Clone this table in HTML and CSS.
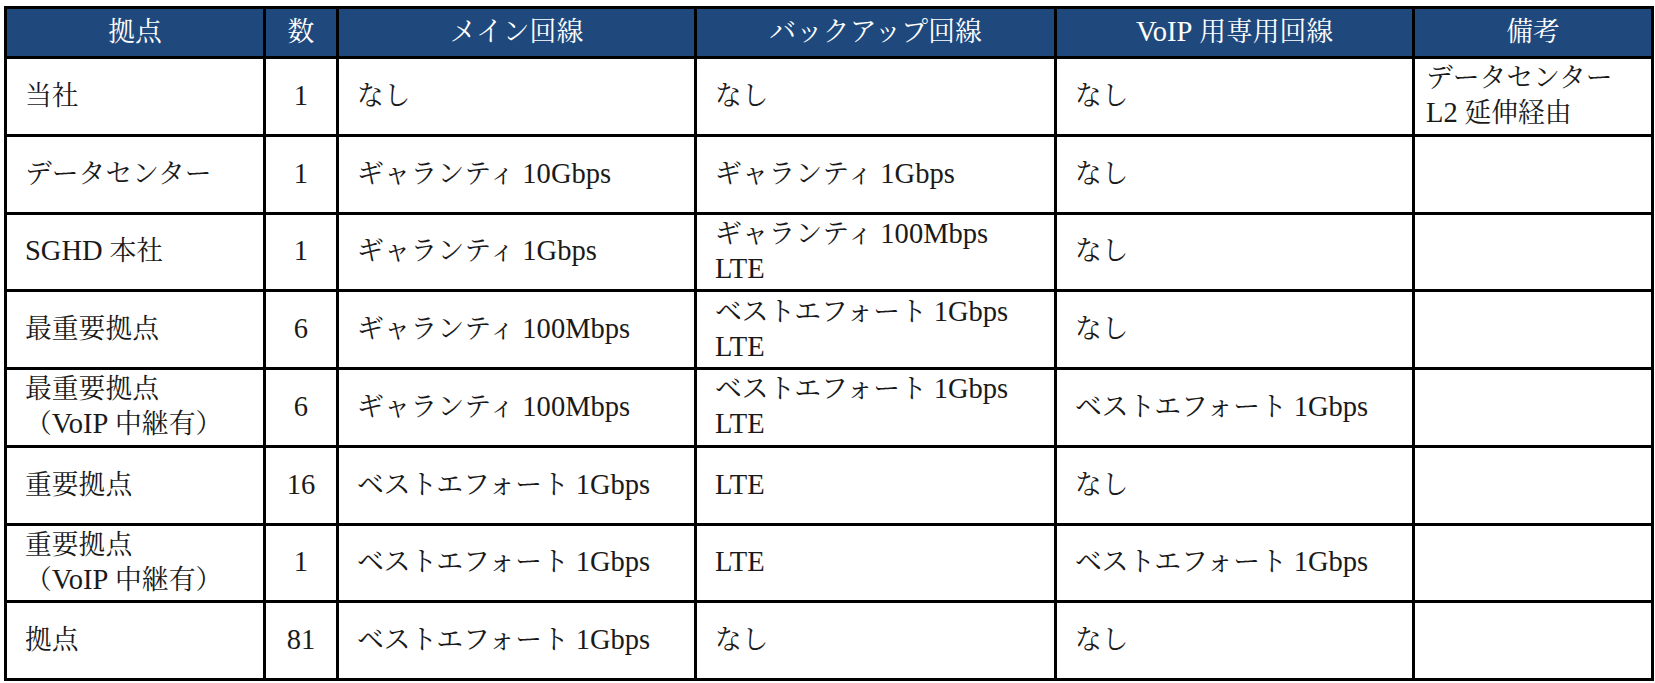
FILE: index.html
```html
<!DOCTYPE html>
<html lang="ja">
<head>
<meta charset="utf-8">
<title>回線構成</title>
<link rel="stylesheet" href="styles.css">
</head>
<body>
<table class="lines">
  <colgroup>
    <col class="c-site">
    <col class="c-num">
    <col class="c-main">
    <col class="c-backup">
    <col class="c-voip">
    <col class="c-note">
  </colgroup>
  <thead>
    <tr>
      <th>拠点</th>
      <th>数</th>
      <th>メイン回線</th>
      <th>バックアップ回線</th>
      <th><span class="lat">VoIP</span> 用専用回線</th>
      <th>備考</th>
    </tr>
  </thead>
  <tbody>
    <tr>
      <td>当社</td>
      <td class="num"><span class="lat">1</span></td>
      <td>なし</td>
      <td>なし</td>
      <td>なし</td>
      <td class="note">データセンター<br><span class="lat">L2</span> 延伸経由</td>
    </tr>
    <tr>
      <td>データセンター</td>
      <td class="num"><span class="lat">1</span></td>
      <td>ギャランティ <span class="lat">10Gbps</span></td>
      <td>ギャランティ <span class="lat">1Gbps</span></td>
      <td>なし</td>
      <td class="note"></td>
    </tr>
    <tr>
      <td><span class="lat">SGHD</span> 本社</td>
      <td class="num"><span class="lat">1</span></td>
      <td>ギャランティ <span class="lat">1Gbps</span></td>
      <td>ギャランティ <span class="lat">100Mbps</span><br><span class="lat">LTE</span></td>
      <td>なし</td>
      <td class="note"></td>
    </tr>
    <tr>
      <td>最重要拠点</td>
      <td class="num"><span class="lat">6</span></td>
      <td>ギャランティ <span class="lat">100Mbps</span></td>
      <td>ベストエフォート <span class="lat">1Gbps</span><br><span class="lat">LTE</span></td>
      <td>なし</td>
      <td class="note"></td>
    </tr>
    <tr>
      <td>最重要拠点<br>（<span class="lat">VoIP</span> 中継有）</td>
      <td class="num"><span class="lat">6</span></td>
      <td>ギャランティ <span class="lat">100Mbps</span></td>
      <td>ベストエフォート <span class="lat">1Gbps</span><br><span class="lat">LTE</span></td>
      <td>ベストエフォート <span class="lat">1Gbps</span></td>
      <td class="note"></td>
    </tr>
    <tr>
      <td>重要拠点</td>
      <td class="num"><span class="lat">16</span></td>
      <td>ベストエフォート <span class="lat">1Gbps</span></td>
      <td><span class="lat">LTE</span></td>
      <td>なし</td>
      <td class="note"></td>
    </tr>
    <tr>
      <td>重要拠点<br>（<span class="lat">VoIP</span> 中継有）</td>
      <td class="num"><span class="lat">1</span></td>
      <td>ベストエフォート <span class="lat">1Gbps</span></td>
      <td><span class="lat">LTE</span></td>
      <td>ベストエフォート <span class="lat">1Gbps</span></td>
      <td class="note"></td>
    </tr>
    <tr>
      <td>拠点</td>
      <td class="num"><span class="lat">81</span></td>
      <td>ベストエフォート <span class="lat">1Gbps</span></td>
      <td>なし</td>
      <td>なし</td>
      <td class="note"></td>
    </tr>
  </tbody>
</table>
</body>
</html>
```
FILE: styles.css
```css
html, body {
  margin: 0;
  padding: 0;
  background: #ffffff;
}

body {
  padding: 6px 0 0 4px;
  font-family: "Liberation Serif", "Noto Serif CJK JP", "Noto Sans CJK JP", serif;
  color: #1a1a1a;
}

.lines {
  border-collapse: collapse;
  table-layout: fixed;
  width: 1647px;
  border: 3px solid #000000;
  font-size: 26.8px;
  line-height: 35px;
}

.c-site { width: 259px; }
.c-num { width: 73px; }
.c-main { width: 358px; }
.c-backup { width: 360px; }
.c-voip { width: 358px; }
.c-note { width: 239px; }

.lines th,
.lines td {
  border: 3px solid #000000;
  padding: 0 8px 0 18px;
  vertical-align: middle;
  text-align: left;
  white-space: nowrap;
}

.lines thead tr {
  height: 50px;
}

.lines th {
  background: #1f497d;
  color: #ffffff;
  font-weight: 400;
  text-align: center;
  padding: 0 4px;
}

.lines tbody tr {
  height: 77.75px;
}

.lines td.num {
  text-align: center;
  padding: 0 4px;
}

.lines td.note {
  padding-left: 11px;
}

.lat {
  font-size: 1.065em;
  line-height: 1;
}
```
